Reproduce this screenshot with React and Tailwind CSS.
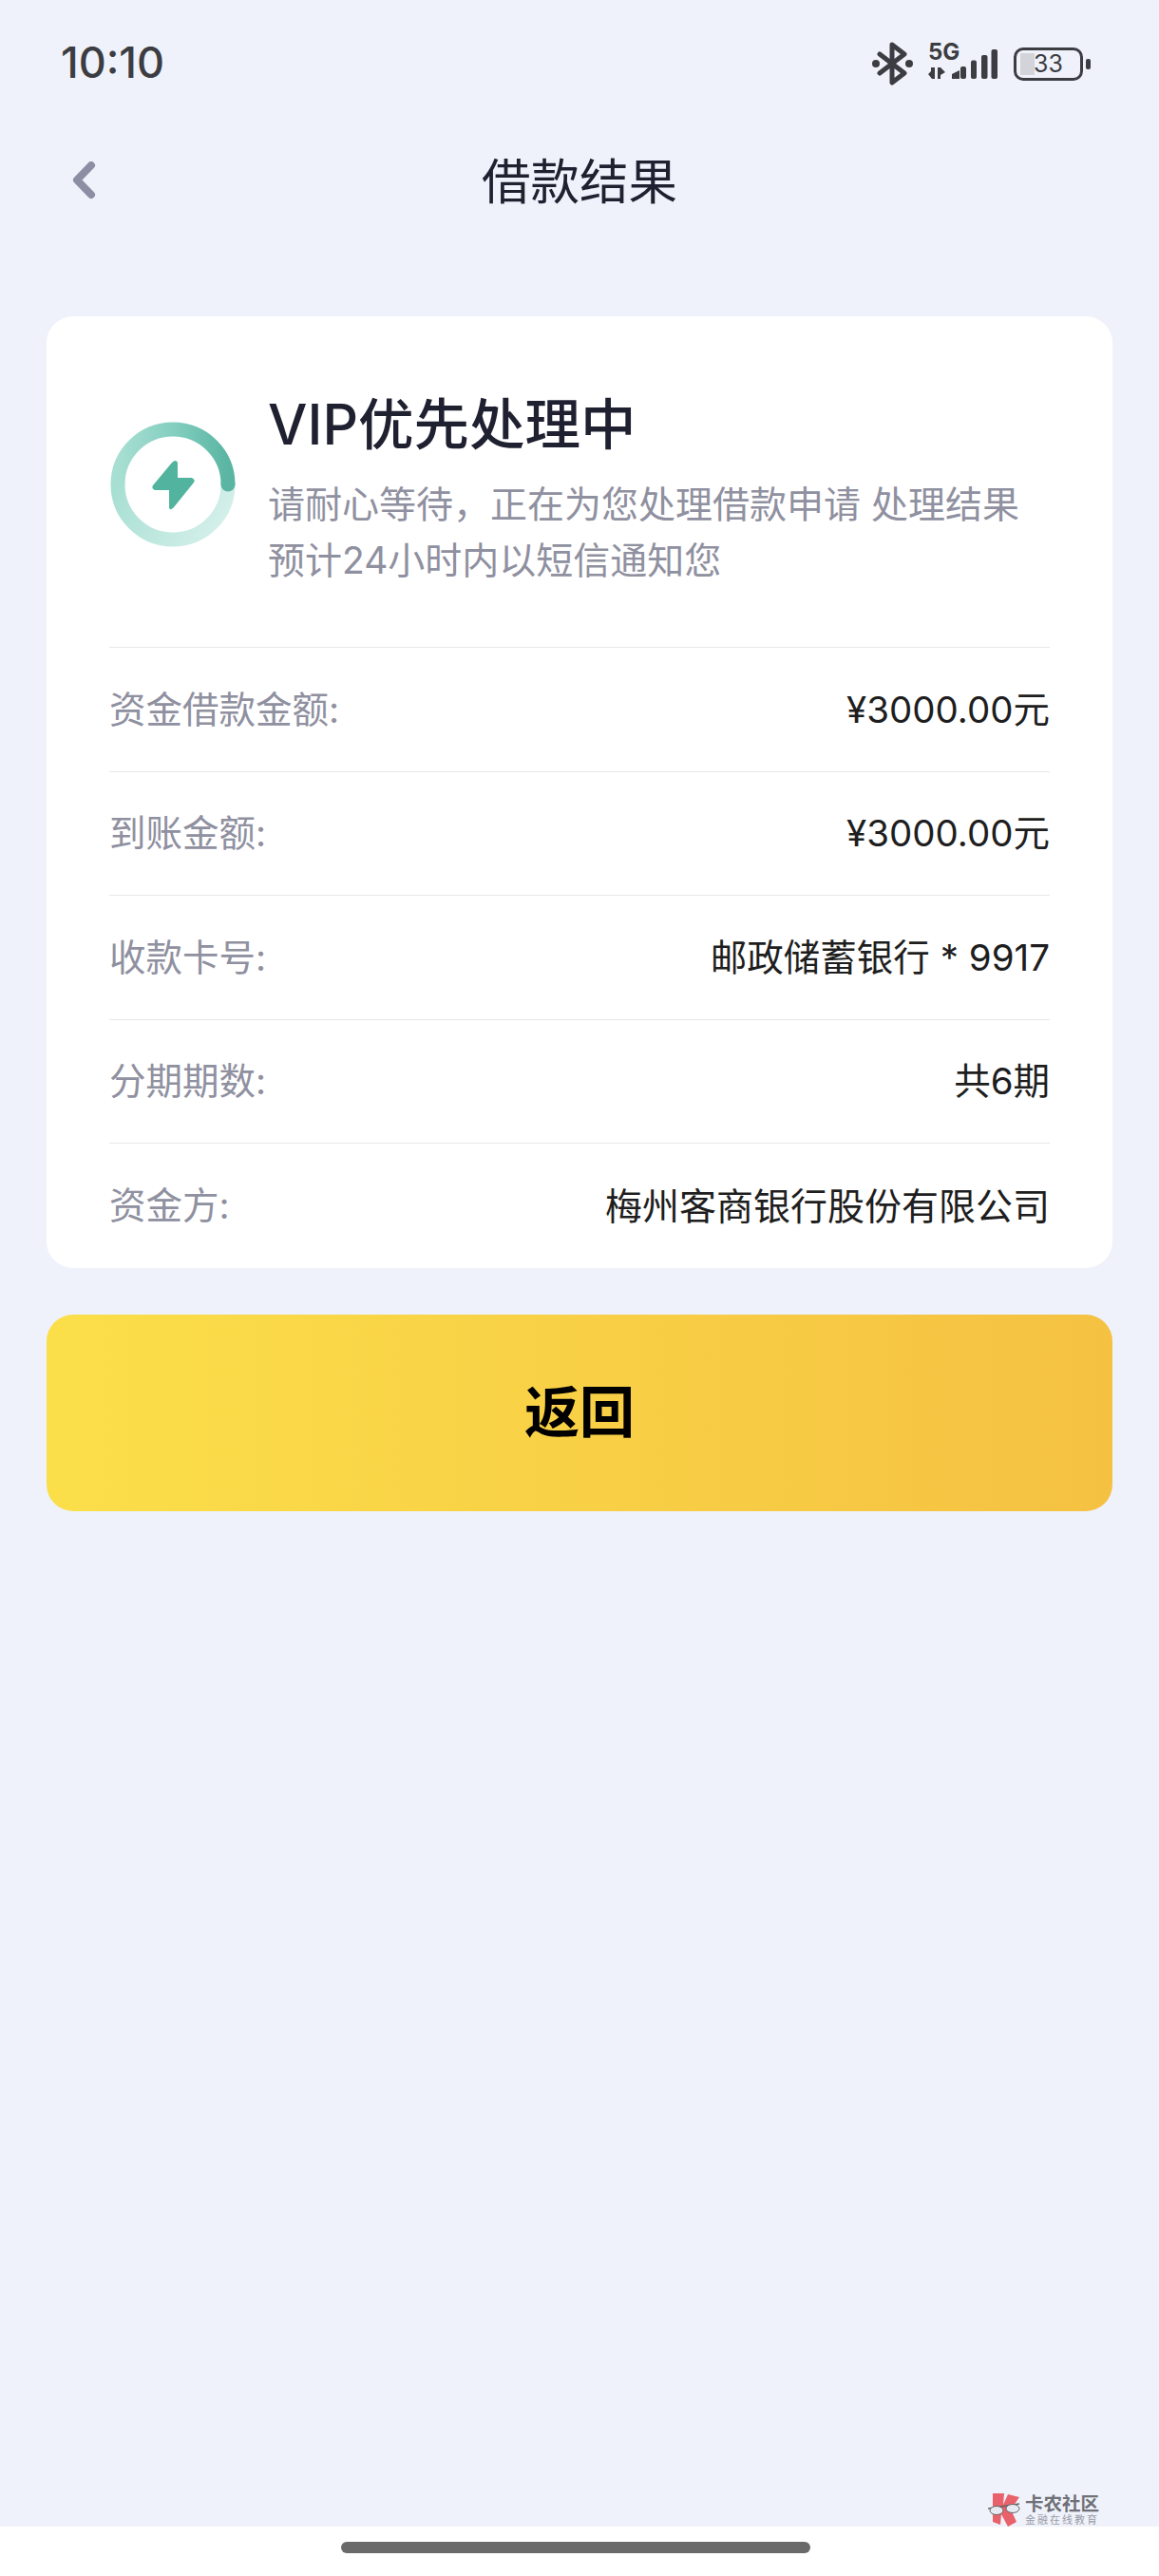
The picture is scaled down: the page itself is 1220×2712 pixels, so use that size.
import React from "react";

const rows = [
  { label: "资金借款金额:", value: "¥3000.00元", size: "text-[38.5px]" },
  { label: "到账金额:", value: "¥3000.00元", size: "text-[38.5px]" },
  { label: "收款卡号:", value: "邮政储蓄银行 * 9917", size: "text-[38.5px]" },
  { label: "分期期数:", value: "共6期", size: "text-[38.5px]" },
  { label: "资金方:", value: "梅州客商银行股份有限公司", size: "text-[39px]" },
];

const StatusIcons = () => (
  <div className="mb-[1px] flex items-center">
    <svg width="44" height="46" viewBox="0 0 44 46" fill="none" className="mr-[15px]">
      <path d="M8 13 L34 33 L21 43 V3 L34 13 L8 33" stroke="#3c3d42" strokeWidth="5" strokeLinejoin="round" strokeLinecap="round" />
      <circle cx="4" cy="23" r="4" fill="#3c3d42" />
      <circle cx="39" cy="23" r="4" fill="#3c3d42" />
    </svg>
    <svg width="73" height="43" viewBox="0 -7 73 43" className="mr-[17px] -mt-[11px]">
      <text x="0" y="16" fontFamily="Inter" fontWeight="700" fontSize="24" fill="#3c3d42">5G</text>
      <path d="M0 31 L3 28 V24 H7 V36 H4 Z M10 24 H13 L18 29 L13 32 V36 H10 Z M33 27 V36 H25 V31 Z" fill="#3c3d42" />
      <rect x="34" y="23" width="6" height="13" rx="2" fill="#3c3d42" />
      <rect x="45" y="16.5" width="6" height="19.5" rx="2" fill="#3c3d42" />
      <rect x="56" y="11" width="6.5" height="25" rx="2" fill="#3c3d42" />
      <rect x="66.5" y="5" width="6.5" height="31" rx="2" fill="#3c3d42" />
    </svg>
    <div className="relative h-[35px] w-[73px] rounded-[10px] border-[3px] border-[#3c3d42]">
      <div className="absolute left-[4px] top-[3px] h-[23px] w-[15px] bg-[#d3d4da]" />
      <span className="absolute inset-0 flex items-center justify-center text-[25px] leading-none text-[#3c3d42]">33</span>
    </div>
    <div className="ml-[3px] h-[11px] w-[5px] rounded-[2px] bg-[#3c3d42]" />
  </div>
);

const ProgressIcon = () => (
  <svg width="134" height="134" viewBox="0 0 134 134" fill="none">
    <defs>
      <linearGradient id="ringTop" x1="9" y1="60" x2="125" y2="60" gradientUnits="userSpaceOnUse">
        <stop offset="0" stopColor="#a8dfd3" />
        <stop offset="0.5" stopColor="#84cfc0" />
        <stop offset="1" stopColor="#5ab5a2" />
      </linearGradient>
      <linearGradient id="ringBottom" x1="10" y1="67" x2="110" y2="130" gradientUnits="userSpaceOnUse">
        <stop offset="0" stopColor="#a8dfd3" />
        <stop offset="1" stopColor="#d5f0ea" />
      </linearGradient>
    </defs>
    <path d="M125 67 A58 58 0 1 1 9 67" stroke="url(#ringBottom)" strokeWidth="15" />
    <path d="M9 67 A58 58 0 0 1 125 67" stroke="url(#ringTop)" strokeWidth="15" />
    <circle cx="125" cy="67" r="7.5" fill="#5ab5a2" />
    <path d="M66 44 Q70 40 72 44 L72 60 L87 60 Q91 62 89 65 L68 91 Q63 96 63 90 L63 73 L48 73 Q44 71 46 68 Z" fill="#52b49e" />
  </svg>
);

export default function App() {
  return (
    <div className="flex h-[2712px] w-[1220px] flex-col overflow-hidden bg-[#eff2fa] font-['Inter','Noto_Sans_CJK_SC',sans-serif]">
      <div className="flex h-[91px] items-end justify-between pl-[64px] pr-[72px]">
        <span className="text-[45px] leading-[50px] font-medium text-[#3c3d42]">10:10</span>
        <StatusIcons />
      </div>

      <div className="relative mt-[59px] flex h-[86px] items-center justify-center">
        <svg width="28" height="40" viewBox="0 0 28 40" fill="none" className="absolute left-[75px] top-[20px]">
          <path d="M21 4 L6 19.5 L21 35" stroke="#8c8ea3" strokeWidth="8" strokeLinecap="round" strokeLinejoin="round" />
        </svg>
        <span className="-mt-[3px] text-[51.5px] leading-none text-[#1f2030]">借款结果</span>
      </div>

      <div className="mx-[49px] mt-[97px] rounded-[28px] bg-white px-[66px]">
        <div className="flex h-[349px] items-start border-b border-[#e8e8ec] pt-[80px]">
          <div className="mt-[30px] mr-[33px] shrink-0">
            <ProgressIcon />
          </div>
          <div className="-mt-[1px]">
            <div className="text-[58.5px] leading-[70px] font-medium text-[#1f2030]">VIP优先处理中</div>
            <div className="mt-[19px] whitespace-nowrap text-[39px] leading-[59px] text-[#8f90a0]">
              请耐心等待，正在为您处理借款申请 处理结果
              <br />
              预计24小时内以短信通知您
            </div>
          </div>
        </div>
        {rows.map((row, i) => (
          <div
            key={row.label}
            className={`flex h-[130.5px] items-center justify-between pt-[2px] ${i < rows.length - 1 ? "border-b border-[#e8e8ec]" : ""}`}
          >
            <span className="text-[38.5px] text-[#8f90a0]">{row.label}</span>
            <span className={`${row.size} text-[#1e1e20]`}>{row.value}</span>
          </div>
        ))}
      </div>

      <button className="mx-[49px] mt-[49px] h-[207px] rounded-[28px] bg-gradient-to-r from-[#fbdf49] to-[#f5c142] text-[58px] font-bold text-black">
        返回
      </button>

      <div className="relative mt-auto flex h-[52px] items-start justify-center bg-white pt-[16px] pr-[8px]">
        <div className="absolute -top-[35px] right-[63px] flex items-start gap-[5px]">
          <svg width="34" height="35" viewBox="0 0 34 35">
            <path d="M5 0 H17 L16 12 L21 1 L33 4 L24 17 L30 30 L21 35 L14 22 L13 33 L5 30 Z" fill="#e8616b" />
            <path d="M0 16 L33 11" stroke="#666" strokeWidth="1.5" />
            <ellipse cx="9" cy="18" rx="7" ry="4.5" fill="#e6eaf2" stroke="#666" strokeWidth="1" />
            <ellipse cx="26" cy="16" rx="7" ry="4.5" fill="#e6eaf2" stroke="#666" strokeWidth="1" />
          </svg>
          <div className="flex flex-col items-start pt-[1px]">
            <span className="text-[19.5px] leading-[20px] font-bold text-[#6f7078]">卡农社区</span>
            <span className="mt-[1px] text-[11px] leading-[12px] tracking-[2px] text-[#9a9ba6]">金融在线教育</span>
          </div>
        </div>
        <div className="h-[12px] w-[494px] rounded-full bg-[#6a6a6a]" />
      </div>
    </div>
  );
}
